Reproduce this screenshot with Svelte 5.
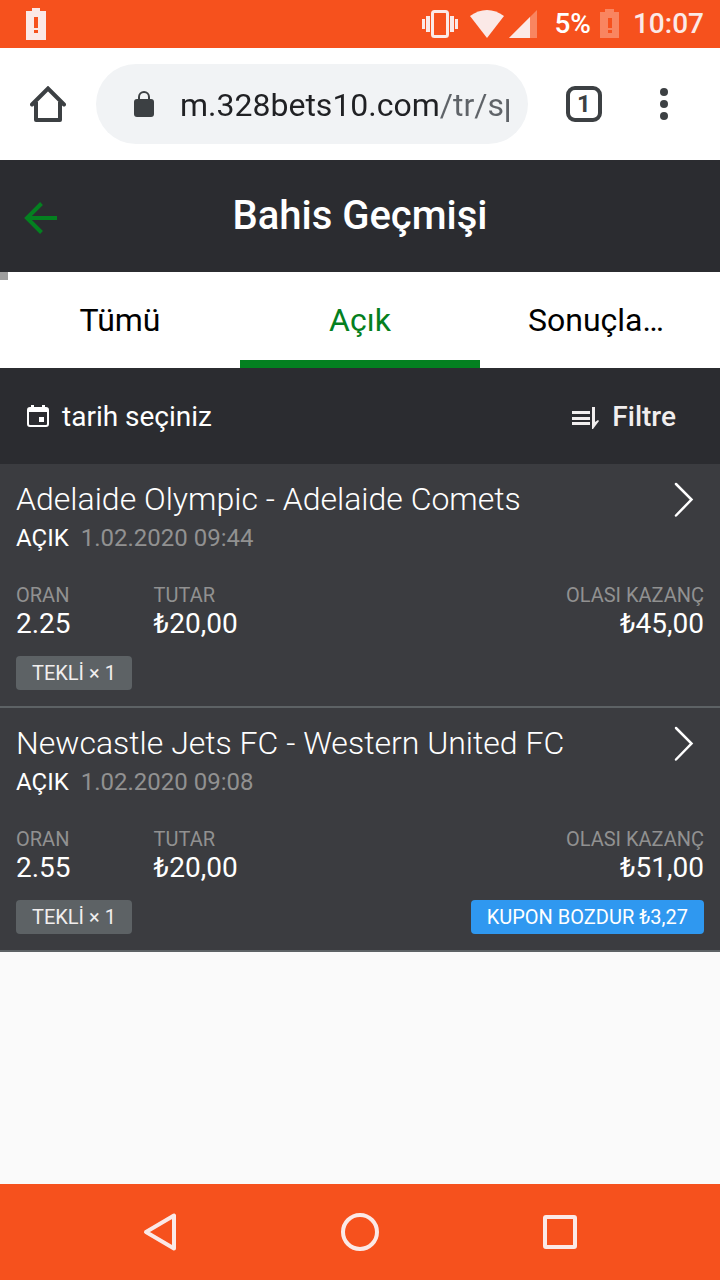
<script lang="ts">
  type Bet = {
    event: string
    status: string
    date: string
    odds: string
    stake: string
    payout: string
    type: string
    cashout?: string
  }

  const tabs = ['Tümü', 'Açık', 'Sonuçlanmış']

  const bets: Bet[] = [
    {
      event: 'Adelaide Olympic - Adelaide Comets',
      status: 'AÇIK',
      date: '1.02.2020 09:44',
      odds: '2.25',
      stake: '₺20,00',
      payout: '₺45,00',
      type: 'TEKLİ × 1',
    },
    {
      event: 'Newcastle Jets FC - Western United FC',
      status: 'AÇIK',
      date: '1.02.2020 09:08',
      odds: '2.55',
      stake: '₺20,00',
      payout: '₺51,00',
      type: 'TEKLİ × 1',
      cashout: '₺3,27',
    },
  ]

  let active = $state(1)
  let url = $state('m.328bets10.com/tr/sports')
</script>

<div class="screen">
  <div class="status-bar">
    <svg width="20" height="32" viewBox="0 0 20 32">
      <path d="M6 0h8v3h6v29H0V3h6z" fill="#fbe9e7" />
      <path d="M8 9h4v11H8zM8 22h4v3H8z" fill="#f6511d" />
    </svg>
    <div class="status-icons">
      <svg width="36" height="28" viewBox="0 0 36 28" fill="#fbe9e7">
        <path d="M0 9h3v10H0zM4 6h4v16H4zM28 6h4v16h-4zM33 9h3v10h-3z" />
        <rect x="10.5" y="1.5" width="15" height="25" rx="2" fill="none" stroke="#fbe9e7" stroke-width="3" />
      </svg>
      <svg class="wifi" width="34" height="28" viewBox="0 0 34 28">
        <path d="M17 28 0 6Q8 0 17 0t17 6z" fill="#fbe9e7" />
      </svg>
      <svg class="signal" width="28" height="28" viewBox="0 0 28 28">
        <path d="M28 0v28H0z" fill="#f98560" />
        <path d="M21 7v21H0z" fill="#fbe9e7" />
      </svg>
      <span class="charge">5%</span>
      <svg class="battery" width="19" height="30" viewBox="0 0 19 30">
        <path d="M5 0h9v3h5v26H0V3h5z" fill="#f98560" />
        <path d="M8 9h4v10H8zM8 21h4v3H8z" fill="#f6511d" />
      </svg>
      <span class="clock">10:07</span>
    </div>
  </div>

  <div class="browser-bar">
    <button class="icon-btn" aria-label="Ana sayfa">
      <svg width="36" height="36" viewBox="0 0 36 36" fill="none" stroke="#3c4043" stroke-width="4" stroke-linejoin="round">
        <path d="M2 18.500 18 2.500 34 18.500" stroke-linejoin="miter" stroke-linecap="round" />
        <path d="M6 16v18h24V16" />
      </svg>
    </button>
    <div class="address">
      <svg width="20" height="26" viewBox="0 0 20 26">
        <path d="M5 10V6a5 5 0 0 1 10 0v4" fill="none" stroke="#3c4043" stroke-width="2" />
        <rect y="8" width="20" height="18" rx="3" fill="#3c4043" />
      </svg>
      <input type="text" bind:value={url} aria-label="Adres" />
    </div>
    <button class="tab-count" aria-label="Sekmeler">1</button>
    <button class="icon-btn menu" aria-label="Menü">
      <svg width="8" height="32" viewBox="0 0 8 32" fill="#3c4043">
        <circle cx="4" cy="4" r="4" />
        <circle cx="4" cy="16" r="4" />
        <circle cx="4" cy="28" r="4" />
      </svg>
    </button>
  </div>

  <header class="page-header">
    <button class="back" aria-label="Geri">
      <svg width="34" height="32" viewBox="0 0 34 32" fill="none" stroke="#048020" stroke-width="4">
        <path d="M17.500 1.500 3 16l14.500 14.500M3 16h30" />
      </svg>
    </button>
    <h1>Bahis Geçmişi</h1>
  </header>

  <nav class="tabs">
    {#each tabs as tab, i}
      <button class="tab" class:active={active === i} onclick={() => (active = i)}>
        <span>{tab}</span>
      </button>
    {/each}
  </nav>

  <div class="toolbar">
    <button class="tool">
      <svg width="22" height="22" viewBox="0 0 22 22">
        <path d="M4 0h3v2h8V0h3v2h1a3 3 0 0 1 3 3v14a3 3 0 0 1-3 3H3a3 3 0 0 1-3-3V5a3 3 0 0 1 3-3h1zM2 7v12q0 1 1 1h16q1 0 1-1V7z" fill="#fff" />
        <rect x="12" y="12" width="5" height="5" fill="#fff" />
      </svg>
      tarih seçiniz
    </button>
    <button class="tool filter">
      <svg width="27" height="22" viewBox="0 0 27 22" fill="#f1eeee">
        <path d="M0 4h18v3H0zM0 10h18v3H0zM0 15h18v3H0z" />
        <path d="M20 0h3v15l3-2 1 1-6 8h-1z" />
      </svg>
      Filtre
    </button>
  </div>

  <main>
    {#each bets as bet}
      <article class="bet">
        <div class="bet-head">
          <div>
            <h2>{bet.event}</h2>
            <p class="meta"><span>{bet.status}</span><time>{bet.date}</time></p>
          </div>
          <button class="open" aria-label="Kupon detayı">
            <svg width="20" height="36" viewBox="0 0 20 36" fill="none" stroke="#fff" stroke-width="2.500" stroke-linecap="round">
              <path d="M2 2 17.500 17.500 2 33.500" />
            </svg>
          </button>
        </div>
        <dl class="figures">
          <div>
            <dt>ORAN</dt>
            <dd>{bet.odds}</dd>
          </div>
          <div>
            <dt>TUTAR</dt>
            <dd>{bet.stake}</dd>
          </div>
          <div class="payout">
            <dt>OLASI KAZANÇ</dt>
            <dd>{bet.payout}</dd>
          </div>
        </dl>
        <div class="bet-foot">
          <span class="badge">{bet.type}</span>
          {#if bet.cashout}
            <button class="badge cashout">KUPON BOZDUR {bet.cashout}</button>
          {/if}
        </div>
      </article>
    {/each}
  </main>

  <div class="nav-bar">
    <button aria-label="Geri git">
      <svg width="40" height="40" viewBox="0 0 40 40">
        <path d="M34 3.500v33L6 20z" />
      </svg>
    </button>
    <button aria-label="Ana ekran">
      <svg width="40" height="40" viewBox="0 0 40 40">
        <circle cx="20" cy="20" r="17" />
      </svg>
    </button>
    <button aria-label="Son uygulamalar">
      <svg width="40" height="40" viewBox="0 0 40 40">
        <rect x="5" y="5" width="30" height="30" rx="1" />
      </svg>
    </button>
  </div>
</div>

<style>
  :global(body) {
    margin: 0;
    background: #fafafa;
    font-family: Roboto, 'Liberation Sans', sans-serif;
  }
  .screen {
    display: flex;
    flex-direction: column;
    min-height: 100vh;
  }
  svg {
    display: block;
    flex: none;
  }
  button {
    padding: 0;
    border: 0;
    background: none;
    color: inherit;
    font: inherit;
    cursor: pointer;
  }
  h1,
  h2,
  p,
  dl,
  dd {
    margin: 0;
  }

  .status-bar {
    display: flex;
    align-items: center;
    justify-content: space-between;
    height: 48px;
    padding: 0 16px 0 26px;
    background: #f6511d;
    color: #fbe9e7;
    font-size: 28px;
    font-weight: 500;
    line-height: 50px;
  }
  .status-icons {
    display: flex;
    align-items: center;
  }
  .wifi {
    margin-left: 12px;
  }
  .signal {
    margin-left: 5px;
  }
  .charge {
    margin-left: 17px;
    color: #fff;
  }
  .battery {
    margin: 0 14px 0 9px;
  }

  .browser-bar {
    display: flex;
    align-items: center;
    padding: 16px 0;
    background: #fff;
  }
  .icon-btn {
    display: flex;
    justify-content: center;
    width: 96px;
  }
  .menu {
    width: 112px;
  }
  .address {
    display: flex;
    flex: 1;
    align-items: center;
    gap: 26px;
    min-width: 0;
    height: 80px;
    box-sizing: border-box;
    padding: 0 19px 0 38px;
    border-radius: 40px;
    background: #f1f3f5;
  }
  .address input {
    flex: 1;
    min-width: 0;
    height: 48px;
    box-sizing: border-box;
    padding: 2px 0 0;
    border: 0;
    outline: 0;
    /* host is dark, the path after it is grey */
    background: linear-gradient(90deg, #202124 259px, #5f6368 259px);
    -webkit-background-clip: text;
    background-clip: text;
    -webkit-text-fill-color: transparent;
    caret-color: #202124;
    color: #202124;
    font-family: inherit;
    font-size: 32px;
  }
  .tab-count {
    width: 36px;
    height: 36px;
    margin: 0 6px 0 38px;
    box-sizing: border-box;
    border: 4px solid #3c4043;
    border-radius: 9px;
    color: #3c4043;
    font-size: 24px;
    font-weight: 700;
    line-height: 28px;
  }

  .page-header {
    display: grid;
    grid-template-columns: 80px 1fr 80px;
    align-items: center;
    height: 112px;
    background: #2b2c30;
    color: #fff;
  }
  .back {
    display: flex;
    padding: 4px 0 0 24px;
  }
  h1 {
    font-size: 40px;
    font-weight: 500;
    line-height: 48px;
    text-align: center;
  }

  .tabs {
    position: relative;
    display: grid;
    grid-template-columns: repeat(3, 1fr);
    background: #fff;
  }
  .tabs::before {
    content: '';
    position: absolute;
    top: 0;
    left: 0;
    width: 8px;
    height: 8px;
    background: #9e9e9e;
  }
  .tab {
    height: 96px;
    min-width: 0;
    padding: 0 48px;
    border-top: 8px solid transparent;
    border-bottom: 8px solid transparent;
    color: #000;
    font-size: 32px;
  }
  .tab span {
    display: block;
    overflow: hidden;
    text-overflow: ellipsis;
    white-space: nowrap;
  }
  .tab.active {
    border-bottom-color: #048020;
    color: #048020;
  }

  .toolbar {
    display: flex;
    align-items: center;
    justify-content: space-between;
    height: 96px;
    padding: 0 44px 0 27px;
    background: #2b2c30;
  }
  .tool {
    display: flex;
    align-items: center;
    gap: 13px;
    color: #fff;
    font-size: 28px;
  }
  .filter {
    color: #f1eeee;
    font-weight: 500;
  }
  .filter svg {
    margin-top: 4px;
  }

  .bet {
    padding: 16px;
    border-bottom: 2px solid #5d6265;
    background: #3b3c40;
    color: #fff;
  }
  .bet-head {
    display: flex;
    align-items: flex-start;
    justify-content: space-between;
  }
  h2 {
    font-size: 32px;
    font-weight: 300;
    line-height: 38px;
  }
  .meta {
    display: flex;
    gap: 12px;
    margin-top: 6px;
    font-size: 24px;
    line-height: 28px;
  }
  time,
  dt {
    color: #919191;
  }
  .open {
    padding: 2px 10px 2px 0;
  }
  .figures {
    display: flex;
    margin-top: 32px;
  }
  .figures div {
    flex: 0 0 20%;
  }
  .figures .payout {
    flex: 1;
    text-align: right;
  }
  dt {
    font-size: 20px;
    line-height: 22px;
  }
  dd {
    margin-top: 2px;
    font-size: 28px;
    line-height: 32px;
  }
  .bet-foot {
    display: flex;
    justify-content: space-between;
    margin-top: 16px;
  }
  .badge {
    padding: 0 16px;
    border-radius: 4px;
    background: #5d6265;
    color: #f1eeee;
    font-size: 20px;
    line-height: 34px;
  }
  .cashout {
    background: #2f98f0;
    color: #fff;
  }

  .nav-bar {
    display: flex;
    align-items: center;
    justify-content: center;
    gap: 160px;
    height: 96px;
    margin-top: auto;
    background: #f6511d;
  }
  .nav-bar svg {
    fill: none;
    stroke: #fbe9e7;
    stroke-width: 4;
    stroke-linejoin: round;
  }
</style>
